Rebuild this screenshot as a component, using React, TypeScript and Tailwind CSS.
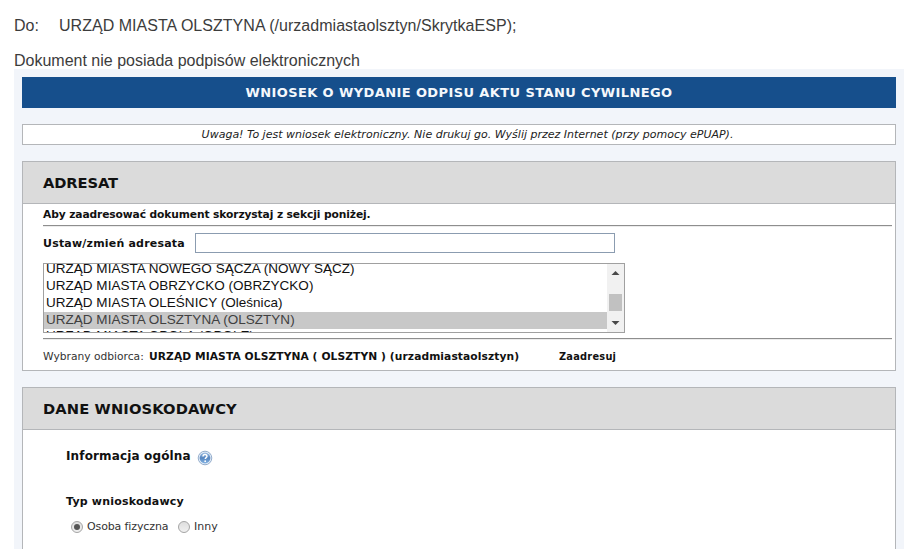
import type { ReactNode } from "react";

const options = [
  "URZĄD MIASTA NOWEGO SĄCZA (NOWY SĄCZ)",
  "URZĄD MIASTA OBRZYCKO (OBRZYCKO)",
  "URZĄD MIASTA OLEŚNICY (Oleśnica)",
  "URZĄD MIASTA OLSZTYNA (OLSZTYN)",
  "URZĄD MIASTA OPOLA (OPOLE)",
];

function Section({ title, className, children }: { title: ReactNode; className: string; children: ReactNode }) {
  return (
    <section className={`border border-[#b4b6b9] bg-white ${className}`}>
      <h2 className="flex h-[42px] items-center border-b border-[#b4b6b9] bg-[#dbdbdb] pt-[2px] pl-5 text-[14.7px] font-bold text-[#111]">
        {title}
      </h2>
      {children}
    </section>
  );
}

function Rule() {
  return <div className="h-[2px] w-[849px] border-t border-[#8e8e8e] bg-[#ececec]" />;
}

function HelpIcon() {
  return (
    <svg width="16" height="16" viewBox="0 0 16 16">
      <defs>
        <linearGradient id="help" x1="0" y1="0" x2="0" y2="1">
          <stop offset="0" stopColor="#9dbde2" />
          <stop offset="0.5" stopColor="#5585c0" />
          <stop offset="1" stopColor="#86b4e2" />
        </linearGradient>
      </defs>
      <circle cx="8" cy="8" r="6.8" fill="#e4edf7" stroke="#8aa5c6" strokeWidth="0.9" />
      <circle cx="8" cy="8" r="5.4" fill="url(#help)" />
      <path d="M6 6.4C6 5.1 6.9 4.5 8 4.5s2 .7 2 1.8c0 1.3-1.8 1.4-1.8 2.8" fill="none" stroke="#fff" strokeWidth="1.4" />
      <circle cx="8.2" cy="11.2" r="0.9" fill="#fff" />
    </svg>
  );
}

function Radio({ checked = false }: { checked?: boolean }) {
  return (
    <span className="flex size-3 items-center justify-center rounded-full border border-[#a5a5a5] bg-linear-to-b from-[#dedede] to-[#f0f0f0]">
      {checked && <span className="size-1.5 rounded-full bg-[#555]" />}
    </span>
  );
}

function optionClass(i: number) {
  if (i === 3) return "h-[17px] bg-[#c8c8c8] pl-[2px] leading-[15px] text-[#404040]";
  if (i === 4) return "h-[17px] pl-[2px] leading-[13px]";
  return "h-[17px] pl-[2px] leading-[15px]";
}

export default function App() {
  return (
    <div className="h-[549px] w-[916px] overflow-hidden bg-white font-['DejaVu_Sans',sans-serif] whitespace-nowrap text-[#111]">
      <header className="h-[69px] pt-[17px] pl-[14px] font-['Liberation_Sans',sans-serif] text-[16px] leading-[18px] text-[#3c3c3c]">
        <div className="flex">
          <span className="w-[45px]">Do:</span>
          <span className="tracking-[0.03px]">URZĄD MIASTA OLSZTYNA (/urzadmiastaolsztyn/SkrytkaESP);</span>
        </div>
        <div className="mt-[17px]">Dokument nie posiada podpisów elektronicznych</div>
      </header>
      <main className="ml-[14px] h-[480px] w-[890px] bg-[#f2f5fa] px-2 pt-2">
        <h1 className="flex h-[31px] items-center justify-center bg-[#164f8c] text-[13px] font-bold tracking-[0.4px] text-[#f4f8fc]">
          WNIOSEK O WYDANIE ODPISU AKTU STANU CYWILNEGO
        </h1>
        <div className="mt-4 flex h-[21px] items-center justify-center border border-[#b4b6b9] bg-white pt-px pl-[17px] text-[11px] text-[#222] italic">
          Uwaga! To jest wniosek elektroniczny. Nie drukuj go. Wyślij przez Internet (przy pomocy ePUAP).
        </div>
        <Section title={<span className="tracking-[-0.1px]">ADRESAT</span>} className="mt-4 h-[210px]">
          <div className="pl-5">
            <div className="h-[21px] pt-[3px] text-[10.7px] leading-4 font-bold tracking-[-0.11px]">Aby zaadresować dokument skorzystaj z sekcji poniżej.</div>
            <Rule />
            <div className="mt-[6px] flex h-5 items-center text-[11px] font-bold">
              <span className="w-[152px] pt-[2px] tracking-[0.2px]">Ustaw/zmień adresata</span>
              <input className="h-5 w-[420px] border border-[#8b9cb0] bg-white" />
            </div>
            <div className="mt-[10px] flex h-[70px] w-[582px] border border-[#a0a0a0] font-['Liberation_Sans',sans-serif] text-[13.5px] tracking-[0.02px]">
              <div className="flex-1 overflow-hidden">
                <div className="-mt-[3px]">
                  {options.map((option, i) => (
                    <div key={option} className={optionClass(i)}>
                      {option}
                    </div>
                  ))}
                </div>
              </div>
              <div className="flex w-[17px] flex-col items-center bg-[#f1f1f1]">
                <svg width="17" height="17" viewBox="0 0 17 17"><path d="M4.5 11 8.5 7l4 4z" fill="#484848" /></svg>
                <div className="mt-[13px] h-[17px] w-[13px] bg-[#c1c1c1]" />
                <svg className="mt-1" width="17" height="17" viewBox="0 0 17 17"><path d="m4.5 6 4 4 4-4z" fill="#484848" /></svg>
              </div>
            </div>
            <div className="mt-[5px]"><Rule /></div>
            <div className="mt-[8px] flex h-[18px] items-center text-[10.7px]">
              <span className="w-[106px] text-[#333]">Wybrany odbiorca:</span>
              <span className="w-[410px] font-bold tracking-[0.08px]">URZĄD MIASTA OLSZTYNA ( OLSZTYN ) (urzadmiastaolsztyn)</span>
              <span className="text-[9.8px] font-bold tracking-[0.25px]">Zaadresuj</span>
            </div>
          </div>
        </Section>
        <Section title={<span className="tracking-[0.12px]">DANE WNIOSKODAWCY</span>} className="mt-4 h-[180px]">
          <div className="pl-[43px]">
            <div className="mt-[17px] flex h-[18px] items-center text-[12px] font-bold">
              <span className="w-[131px] tracking-[0.14px]">Informacja ogólna</span>
              <span className="mt-[3px]"><HelpIcon /></span>
            </div>
            <div className="mt-[29px] h-4 text-[11px] leading-4 font-bold tracking-[0.2px]">Typ wnioskodawcy</div>
            <div className="mt-[9px] flex h-4 items-center pl-[5px] text-[11px] text-[#333]">
              <Radio checked />
              <span className="ml-1 w-[91px] pt-px tracking-[-0.12px]">Osoba fizyczna</span>
              <Radio />
              <span className="ml-1 pt-px">Inny</span>
            </div>
          </div>
        </Section>
      </main>
    </div>
  );
}
